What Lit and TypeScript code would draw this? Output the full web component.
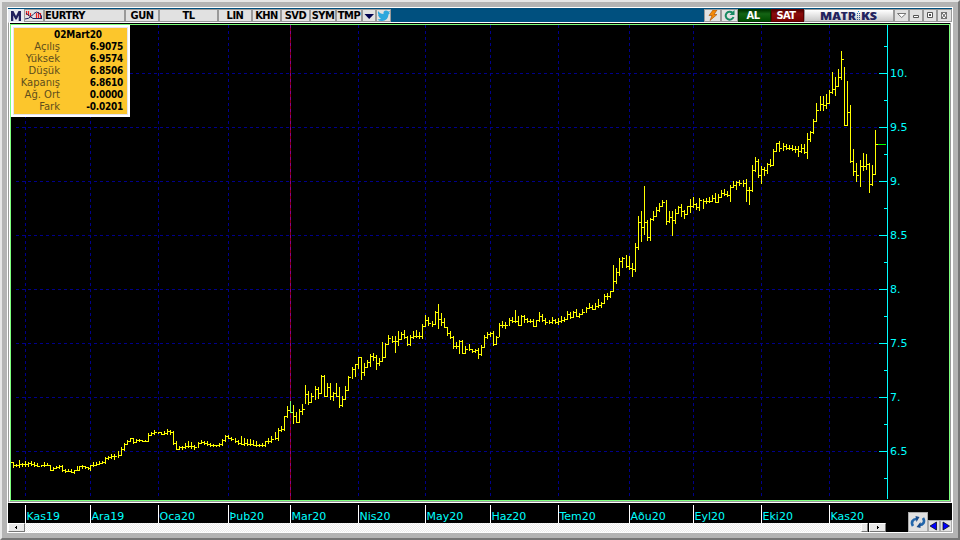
import { LitElement, html, svg, css } from "lit";
import { customElement } from "lit/decorators.js";

// Bars as "x,high,low,close", in chart pixels.
const BARS = `10,462,462,462 13,462,467,465 16,464,466,465 19,460,467,464 22,463,466,464 25,461,466,464 28,462,466,463 31,461,465,464 34,462,466,465 37,463,466,466 41,465,466,465 44,462,466,465 47,463,465,465 50,465,470,470 53,467,470,468 56,466,468,467 59,465,468,466 62,465,471,470 65,469,472,471 68,469,471,471 71,469,472,472 74,470,473,470 77,466,470,470 79,466,470,466 82,465,468,466 85,466,468,467 88,467,469,468 90,465,470,465 93,462,466,465 96,462,465,464 99,461,464,463 102,461,463,462 105,457,463,458 108,456,459,457 111,454,458,456 114,454,459,456 118,451,457,455 121,447,455,449 124,443,450,444 127,440,444,441 130,438,441,438 133,438,443,442 136,439,442,440 139,439,441,440 142,440,441,441 145,440,441,441 148,433,441,435 151,432,435,433 154,430,434,432 158,432,433,432 161,432,434,434 164,431,434,433 167,429,434,431 170,430,434,432 173,431,444,443 176,441,449,449 179,446,449,447 182,446,449,447 185,443,448,446 188,441,447,446 191,442,448,446 194,445,449,447 198,442,447,443 201,440,443,442 204,441,444,443 207,441,445,444 210,443,446,445 213,444,446,445 216,445,446,445 219,443,446,444 222,439,445,440 225,435,441,436 228,435,438,438 231,437,440,439 235,438,442,441 238,440,444,443 241,436,444,444 244,438,445,443 247,439,445,444 250,439,445,444 253,440,445,445 256,441,446,445 259,444,446,445 262,443,446,445 265,441,446,441 268,438,443,441 271,436,442,439 275,432,439,438 278,428,440,430 281,426,431,429 284,416,430,416 287,406,417,410 293,405,423,416 296,412,422,422 299,409,422,411 302,404,414,409 305,385,403,394 308,391,404,402 311,393,402,396 315,386,399,389 318,387,398,393 321,375,393,376 324,375,396,396 327,383,396,387 330,383,399,396 333,392,400,393 336,383,396,396 339,387,407,405 342,396,406,399 345,386,399,390 348,376,390,377 352,367,378,369 355,364,376,364 358,357,368,357 361,357,379,372 364,363,375,367 367,360,367,362 370,354,366,356 373,353,360,357 376,355,369,363 379,358,365,361 382,342,361,357 385,343,357,344 388,335,344,338 392,336,342,341 395,336,352,341 398,331,345,339 401,332,339,334 404,330,338,337 407,336,345,344 410,335,345,337 413,331,338,336 416,330,337,336 419,332,338,336 422,324,338,326 425,315,326,320 428,317,325,323 432,321,326,324 435,311,324,312 438,304,328,319 441,313,325,322 444,318,327,327 447,327,335,333 450,331,338,337 453,336,348,346 456,342,348,346 459,340,353,341 462,340,353,353 465,346,353,349 469,344,350,349 472,349,352,351 475,349,352,350 478,348,358,354 481,345,355,347 484,335,347,337 487,332,338,334 490,332,336,333 493,331,345,344 496,336,344,337 499,323,336,325 502,321,327,325 505,322,328,325 509,318,325,320 512,317,322,321 515,310,322,321 518,316,325,325 521,315,325,316 524,315,322,319 527,318,322,321 530,319,322,321 533,319,326,326 536,320,326,320 539,312,321,316 542,314,321,320 545,318,324,322 549,320,323,322 552,317,323,320 555,319,323,322 558,318,324,321 561,316,322,320 564,317,321,319 567,311,319,314 570,312,318,317 573,311,317,312 576,309,316,316 579,313,317,314 582,309,314,312 586,307,312,308 589,303,308,307 592,305,309,309 595,303,309,306 598,299,307,305 601,302,307,303 604,294,303,296 607,293,299,296 610,291,297,291 613,265,291,281 616,268,283,272 619,258,275,261 622,257,267,258 626,255,267,266 629,256,269,268 632,263,276,269 635,243,271,247 638,216,249,222 641,211,241,227 644,186,234,222 647,220,240,237 650,218,240,219 653,211,220,216 656,207,216,210 659,203,211,206 662,200,206,202 666,200,224,221 669,211,222,217 672,211,235,220 675,209,223,213 678,206,213,207 681,204,216,211 684,210,218,214 687,206,214,206 690,199,212,206 693,197,207,204 696,203,209,207 699,198,210,200 703,199,208,201 706,198,203,201 709,197,202,201 712,195,201,198 715,193,202,202 718,194,202,197 721,190,197,193 724,189,195,194 727,191,196,195 730,185,201,187 733,181,187,185 736,181,189,182 739,180,185,183 743,180,186,183 746,179,201,190 749,187,204,190 752,165,191,170 755,157,171,161 758,159,177,175 761,166,183,169 764,167,175,170 767,163,173,164 770,159,166,165 773,149,165,151 776,143,151,143 779,141,151,148 783,143,150,146 786,144,149,148 789,145,149,148 792,145,150,149 795,146,152,149 798,146,156,151 801,144,152,148 804,144,153,152 807,133,158,139 810,131,141,132 813,119,133,121 816,103,121,110 820,96,110,104 823,96,110,105 826,94,108,103 829,90,103,92 832,72,93,89 835,77,95,86 838,69,86,77 841,51,79,59 844,67,125,125 847,81,125,112 850,105,162,161 853,149,175,171 856,163,181,175 860,160,186,166 863,153,170,166 866,154,169,164 869,163,192,184 872,165,185,174 875,130,174,144`
  .split(" ")
  .map((s) => s.split(",").map(Number));

const MONTHS: [number, string][] = [
  [25, "Kas19"], [90, "Ara19"], [158, "Oca20"], [228, "Þub20"], [290, "Mar20"],
  [358, "Nis20"], [425, "May20"], [490, "Haz20"], [558, "Tem20"], [629, "Aðu20"],
  [693, "Eyl20"], [761, "Eki20"], [829, "Kas20"],
];
const PRICES = ["10.", "9.5", "9.", "8.5", "8.", "7.5", "7.", "6.5"];

@customElement("quote-panel")
class QuotePanel extends LitElement {
  static styles = css`
    :host { display: block; box-sizing: border-box; width: 119px; height: 92px;
      background: #fcc62c; border: 2px solid #fff; outline: 1px solid #e4e4ee; outline-offset: -3px;
      padding: 2px 5px 0 4px; font: 10px/12px "DejaVu Sans", sans-serif; color: #5f4e1c; }
    .title { text-align: center; padding-left: 16px; height: 12px; color: #000; }
    .row { display: flex; height: 12px; }
    .label { width: 43px; text-align: right; white-space: nowrap; }
    b, .title { font-weight: bold; font-family: "DejaVu Sans Condensed", "DejaVu Sans", sans-serif; font-stretch: condensed; letter-spacing: -.25px; color: #000; }
    b { flex: 1; text-align: right; }
    .title { letter-spacing: -.1px; }
  `;
  rows = [["Açılış", "6.9075"], ["Yüksek", "6.9574"], ["Düşük", "6.8506"], ["Kapanış", "6.8610"], ["Ağ. Ort", "0.0000"], ["Fark", "-0.0201"]];
  render() {
    return html`<div class="title">02Mart20</div>
      ${this.rows.map(([l, v]) => html`<div class="row"><span class="label">${l}</span><b>${v}</b></div>`)}`;
  }
}

@customElement("tool-bar")
class ToolBar extends LitElement {
  static styles = css`
    :host { display: flex; box-sizing: border-box; height: 14px; background: #00507f; border-top: 1px solid #00507f;
      font: bold 11px/12px "DejaVu Sans Condensed", "DejaVu Sans", sans-serif; font-stretch: condensed; letter-spacing: -.5px; color: #000; }
    .btn { box-sizing: border-box; height: 13px; background: #e1e1e1; border: 1px solid #999;
      text-align: center; overflow: hidden; white-space: nowrap; flex: none; line-height: 12px; }
    .sym { text-align: left; }
    .logo { background: #e8eaf0; border-color: #e8eaf0; }
    .buy { background: linear-gradient(#003500, #146414 35%, #004d00); border-color: #003a00; color: #fff; padding-right: 3px; }
    .sell { background: linear-gradient(#500, #8a0d0d 35%, #780000); border-color: #5b0000; color: #fff; padding-right: 3px; }
    .brand { background: linear-gradient(#fff, #c9c9c9); overflow: visible; }
    .gap { flex: 1; }
    svg { display: block; overflow: visible; }
    text { letter-spacing: 0; }
  `;
  buttons: [string, number][] = [["GUN", 34], ["TL", 59], ["LIN", 34], ["KHN", 29], ["SVD", 29], ["SYM", 26], ["TMP", 26]];
  btn(w: number, body: unknown, cls = "") {
    return html`<div class="btn ${cls}" style="width:${w}px">${body}</div>`;
  }
  icon(w: number, body: unknown) {
    return html`<svg width=${w} height="11" viewBox="0 0 ${w} 11">${body}</svg>`;
  }
  render() {
    return html`
      ${this.btn(16, this.icon(14, svg`<path d="M2 11V1H4.500L7 6L9.500 1H12V11H9.700V5.500L7.700 9.500H6.300L4.300 5.500V11Z" fill="#20205e"/>`), "logo")}
      ${this.btn(20, this.icon(18, svg`
        <path d="M1.500 1V5M3.500 1V6M5.500 3V7M11.500 3V9M13.500 2V9M15.500 3V9" stroke="#e22" stroke-width="1.200"/>
        <path d="M0 9Q4 9 6.500 6T11.500 2Q14 2 16.500 6V9M1 3Q4 6 8 8.500H17" fill="none" stroke="#20205e"/>`))}
      ${this.btn(81, "EURTRY", "sym")}
      ${this.buttons.map(([t, w]) => this.btn(w, t))}
      ${this.btn(14, this.icon(12, svg`<path d="M1.500 4H11L6.200 9Z" fill="#000050"/>`))}
      ${this.btn(15, this.icon(13, svg`<path d="M1 1Q3 4 6.500 4Q6 .5 9 .5Q10.500 .5 11.200 1.500L13 1L12 3L13 3L11.500 4.500Q11 11 5 11Q2 11 .5 9.500Q3 9.500 4 8.500Q2 8 2 6.800L1 5.500L1.500 5Q.5 3 1 1Z" fill="#2ca7dd"/>`))}
      <span class="gap"></span>
      ${this.btn(17, this.icon(15, svg`<path d="M8 0L4 5.500H7L5 10.500L12 4.500H9L12 0Z" fill="#f58a07" stroke="#a24c00" stroke-width=".6"/>`))}
      ${this.btn(17, this.icon(15, svg`<path d="M11.500 7A4 4 0 1 1 10.500 2.800" fill="none" stroke="#168a62" stroke-width="2"/><path d="M12.500 0V5H7.500Z" fill="#168a62"/>`))}
      ${this.btn(33, "AL", "buy")}
      ${this.btn(33, "SAT", "sell")}
      ${this.btn(90, this.icon(88, svg`
        <g fill="#24245f" font-family="Open Sans, sans-serif" font-weight="800" font-size="11">
          <text x="15" y="9.500" textLength="36" lengthAdjust="spacingAndGlyphs">MATR</text>
          <text x="56" y="9.500" textLength="16" lengthAdjust="spacingAndGlyphs">KS</text></g>
        <path d="M52 3.500h1M54 3.500h1M52 5.500h1M54 5.500h1M52 7.500h1M54 7.500h1M52 9.500h1M54 9.500h1" stroke="#35659b"/><path d="M53 1.500h1" stroke="#2ca7dd"/>`), "brand")}
      ${this.btn(15, this.icon(13, svg`<path d="M2.500 3.500H11L6.700 7.500Z" fill="#fff" stroke="#777"/>`))}
      ${this.btn(14, this.icon(12, svg`<path d="M3.500 5.500h5v2h-5z" fill="#fff" stroke="#555"/>`))}
      ${this.btn(14, this.icon(12, svg`<path d="M3.500 2.500h5v5h-5z" fill="#fff" stroke="#555"/><path d="M5 4h2v2h-2z" fill="#555"/>`))}
      ${this.btn(15, this.icon(13, svg`<path d="M3.500 2.500h5v6h-5z" fill="#fff" stroke="#777"/><path d="M3.500 2.500L8.500 8.500M8.500 2.500L3.500 8.500" stroke="#555"/>`))}`;
  }
}

@customElement("price-chart")
class PriceChart extends LitElement {
  static styles = css`
    :host { display: block; background: #000; }
    svg { display: block; shape-rendering: crispEdges; }
    text { font: 11px "DejaVu Sans", sans-serif; fill: #0ff; }
    .grid { stroke: #00008b; stroke-dasharray: 3 3; }
    .axis { stroke: #0ff; }
  `;
  render() {
    const bars = BARS.map(([x, hi, lo, c], i) => {
      const next = BARS[i + 1];
      return `M${x + 0.5} ${hi}V${lo + 1}M${x} ${c + 0.5}H${next ? Math.min(next[0], x + 3) : x + 3}`;
    }).join("");
    return html`<svg width="938" height="475" viewBox="11 25 938 475">
      <g class="grid">
        ${MONTHS.map(([x]) => svg`<path d="M${x + 0.5} 25V499"/>`)}
        ${PRICES.map((_, i) => svg`<path d="M16 ${73.5 + i * 54}H880"/>`)}
      </g>
      <path d="M290.500 25V500" stroke="#900018"/>
      <path d="M290.500 25V499" stroke="#8b008b" stroke-dasharray="3 3"/>
      <path d=${bars} stroke="#ff0" fill="none"/>
      <path d="M290.500 401V413M290 412.500H293" stroke="#7f7"/>
      <path d="M878 144.500H886" stroke="#0f0"/>
      <path class="axis" d="M887.500 25V499${PRICES.map((_, i) => `M879 ${73.5 + i * 54}H887M884 ${46.5 + i * 54}H887`).join("")}M884 478.500H887"/>
      ${PRICES.map((p, i) => svg`<text x="890" y=${77 + i * 54}>${p}</text>`)}
    </svg>`;
  }
}

@customElement("time-axis")
class TimeAxis extends LitElement {
  static styles = css`
    :host { display: block; background: #000; height: 29px; position: relative; }
    svg { display: block; }
    text { font: 11px "DejaVu Sans", sans-serif; fill: #0ff; }
    .scroll { display: flex; height: 9px; width: 878px; }
    .track { flex: 1; background: repeating-conic-gradient(#ececec 0 25%, #fff 0 50%) 0 0 / 2px 2px; }
    .key { box-sizing: border-box; background: #e9e9e9; border: 1px solid #fff; border-right-color: #777; border-bottom-color: #777; }
    .key svg { shape-rendering: crispEdges; }
    .arrow { width: 17px; }
    .thumb { width: 7px; margin-right: 1px; }
    .tools { position: absolute; right: 0; bottom: 0; display: flex; align-items: flex-end; }
    .tool { box-sizing: border-box; width: 12px; height: 12px; background: #e1e1e1; border: 1px solid #aaa; }
    .big { width: 20px; height: 20px; }
  `;
  render() {
    return html`<svg width="944" height="20" viewBox="8 503 944 20">
        ${MONTHS.map(([x, m]) => svg`<path d="M${x + 0.5} 505V523" stroke="#fff"/><text x=${x + 1.5} y="520">${m}</text>`)}
      </svg>
      <div class="scroll">
        <div class="key arrow"><svg width="15" height="7"><path d="M6 3h1v1h-1zM7 2h1v3h-1z"/></svg></div>
        <div class="track"></div>
        <div class="key thumb"></div>
        <div class="key arrow"><svg width="15" height="7"><path d="M8 3h1v1h-1zM7 2h1v3h-1z"/></svg></div>
      </div>
      <div class="tools">
        <div class="tool big"><svg width="18" height="18">
          <g fill="none" stroke="#2266ab" stroke-width="2.600"><path d="M4 13C1.500 9 4 6 7.500 6"/><path d="M14 5C16.500 9 14 12 10.500 12"/></g>
          <path d="M6.500 3L10.500 4L7.500 9ZM11.500 9L7.500 14L11.500 15Z" fill="#174b8c"/></svg></div>
        <div class="tool"><svg width="10" height="10"><path d="M1 5L7.500 1V9Z" fill="#00f" stroke="#000" stroke-width=".7"/></svg></div>
        <div class="tool"><svg width="10" height="10"><path d="M8.500 5L2 1V9Z" fill="#00f" stroke="#000" stroke-width=".7"/></svg></div>
      </div>`;
  }
}

@customElement("app-root")
class AppRoot extends LitElement {
  static styles = css`
    :host { display: block; box-sizing: border-box; width: 960px; height: 540px; overflow: hidden; background: #b4b4b4;
      border: 2px solid #e6e6e6; border-right-color: #777; border-bottom-color: #777; padding: 5px; }
    .window { box-sizing: border-box; width: 946px; height: 526px; border: 1px solid #fff; }
    .plot { box-sizing: border-box; position: relative; width: 944px; height: 481px; overflow: hidden;
      border: 1px solid #fff; border-left-color: #999; background: #000; }
    .rail { box-sizing: border-box; height: 479px; padding-top: 1px; border-left: 1px solid #fff; border-right: 1px solid #999; border-bottom: 1px solid #999; }
    .frame { box-sizing: border-box; width: 940px; height: 477px; border: 1px solid #7dff7d; overflow: hidden; }
    quote-panel { position: absolute; left: 2px; top: 2px; }
  `;
  render() {
    return html`<div class="window">
      <tool-bar></tool-bar>
      <div class="plot">
        <div class="rail"><div class="frame"><price-chart></price-chart></div></div>
        <quote-panel></quote-panel>
      </div>
      <time-axis></time-axis>
    </div>`;
  }
}
